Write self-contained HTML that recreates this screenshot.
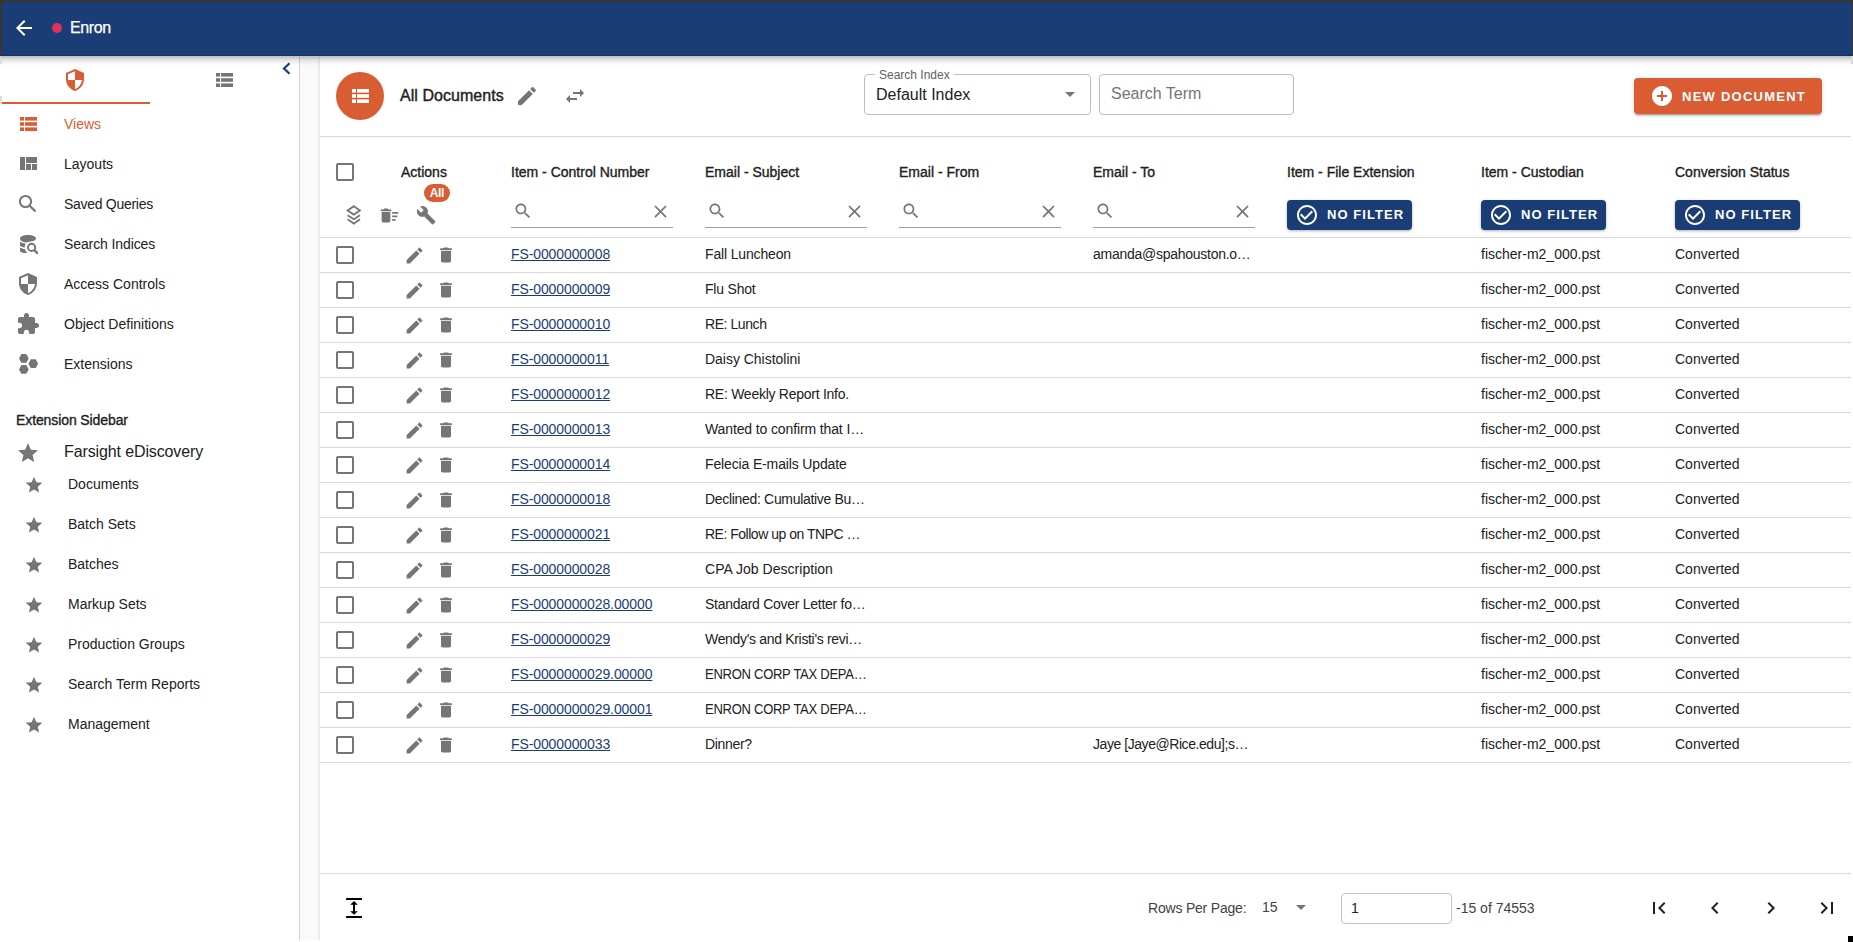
<!DOCTYPE html>
<html><head><meta charset="utf-8"><style>
*{margin:0;padding:0;box-sizing:content-box}
html,body{width:1853px;height:942px;overflow:hidden;background:#fff;font-family:"Liberation Sans",sans-serif;}
.t{position:absolute;white-space:nowrap}
.ic{position:absolute;display:block}
#frame{position:absolute;left:0;top:0;width:1853px;height:56px;background:#363636}
#hdr{position:absolute;left:2px;top:2px;width:1850px;height:54px;background:#1b3d75;border-radius:3px 6px 0 0}
#hshadow{position:absolute;left:0;top:57px;width:1853px;height:9px;background:linear-gradient(rgba(0,0,0,.23),rgba(0,0,0,.1) 35%,rgba(0,0,0,.03) 70%,rgba(0,0,0,0));z-index:5}
#hline1{position:absolute;left:2px;top:55px;width:1850px;height:1px;background:#17315f;z-index:5}
#hline2{position:absolute;left:0;top:56px;width:1853px;height:1px;background:#bcc3cf;z-index:5}
#sb{position:absolute;left:0;top:56px;width:299px;height:884px;background:#fff;border-right:1px solid #d4d4d4}
#card{position:absolute;left:320px;top:56px;width:1533px;height:886px;background:#fff;}
#cardedge{position:absolute;left:317px;top:56px;width:3px;height:884px;background:linear-gradient(90deg,rgba(0,0,0,0),rgba(0,0,0,.035) 50%,rgba(0,0,0,.09))}
#gutter{position:absolute;left:300px;top:56px;width:20px;height:884px;background:#fafafa}
</style></head>
<body>
<div id="frame"></div>
<div id="hdr"></div>
<svg class="ic" style="left:12px;top:16px;width:24px;height:24px;" viewBox="0 0 24 24"><path fill="#fff" d="M20 11H7.83l5.59-5.59L12 4l-8 8 8 8 1.41-1.41L7.83 13H20v-2z"/></svg>
<div style="position:absolute;left:52px;top:23px;width:10px;height:10px;border-radius:50%;background:#e2305c"></div>
<div class="t" style="left:70px;top:18px;font-size:16px;color:#fff;font-weight:normal;line-height:20px;letter-spacing:-0.4px;-webkit-text-stroke:0.25px #fff;">Enron</div>
<div id="hshadow"></div><div id="hline1"></div><div id="hline2"></div>
<div id="sb"></div>
<svg class="ic" style="left:63px;top:68px;width:24px;height:24px;" viewBox="0 0 24 24"><path fill="#d95c33" d="M12 1L3 5v6c0 5.55 3.84 10.74 9 12 5.16-1.26 9-6.45 9-12V5l-9-4zm0 10.99h7c-.53 4.12-3.28 7.790-7 8.94V12H5V6.3l7-3.11v8.8z"/></svg>
<svg class="ic" style="left:216px;top:73px;width:17px;height:14px;" viewBox="0 0 17 14"><g fill="#757575"><rect x="0" y="0" width="4" height="3.6"/><rect x="5" y="0" width="12" height="3.6"/><rect x="0" y="5.2" width="4" height="3.6"/><rect x="5" y="5.2" width="12" height="3.6"/><rect x="0" y="10.4" width="4" height="3.6"/><rect x="5" y="10.4" width="12" height="3.6"/></g></svg>
<div style="position:absolute;left:2px;top:102px;width:148px;height:2px;background:#d95c33"></div>
<svg class="ic" style="left:282px;top:62px;width:9px;height:13px;" viewBox="0 0 9 13"><path d="M7.5 1.2 L2 6.5 L7.5 11.8" fill="none" stroke="#1b3d75" stroke-width="2.2"/></svg>
<div class="t" style="left:64px;top:115px;font-size:14px;color:#d95c33;font-weight:normal;line-height:18px;letter-spacing:0px;">Views</div>
<div class="t" style="left:64px;top:155px;font-size:14px;color:#212121;font-weight:normal;line-height:18px;letter-spacing:0px;">Layouts</div>
<div class="t" style="left:64px;top:195px;font-size:14px;color:#212121;font-weight:normal;line-height:18px;letter-spacing:-0.29px;">Saved Queries</div>
<div class="t" style="left:64px;top:235px;font-size:14px;color:#212121;font-weight:normal;line-height:18px;letter-spacing:-0.1px;">Search Indices</div>
<div class="t" style="left:64px;top:275px;font-size:14px;color:#212121;font-weight:normal;line-height:18px;letter-spacing:0px;">Access Controls</div>
<div class="t" style="left:64px;top:315px;font-size:14px;color:#212121;font-weight:normal;line-height:18px;letter-spacing:0px;">Object Definitions</div>
<div class="t" style="left:64px;top:355px;font-size:14px;color:#212121;font-weight:normal;line-height:18px;letter-spacing:0px;">Extensions</div>
<svg class="ic" style="left:20px;top:117px;width:17px;height:14px;" viewBox="0 0 17 14"><g fill="#d95c33"><rect x="0" y="0" width="4" height="3.6"/><rect x="5" y="0" width="12" height="3.6"/><rect x="0" y="5.2" width="4" height="3.6"/><rect x="5" y="5.2" width="12" height="3.6"/><rect x="0" y="10.4" width="4" height="3.6"/><rect x="5" y="10.4" width="12" height="3.6"/></g></svg>
<svg class="ic" style="left:20px;top:157px;width:17px;height:13px;" viewBox="0 0 17 13"><g fill="#757575"><rect x="0" y="0" width="5" height="13"/><rect x="6" y="0" width="11" height="6"/><rect x="6" y="7" width="5" height="6"/><rect x="12" y="7" width="5" height="6"/></g></svg>
<svg class="ic" style="left:18px;top:194px;width:19px;height:19px;" viewBox="0 0 19 19"><circle cx="7.5" cy="7.5" r="5.6" fill="none" stroke="#757575" stroke-width="2"/><path d="M11.5 11.5 L17.5 17.5" stroke="#757575" stroke-width="2.2"/></svg>
<svg class="ic" style="left:14px;top:230px;width:30px;height:30px;" viewBox="0 0 30 30"><g fill="#757575"><path d="M6 8.6 C6 6.3 9.6 5 14 5 C18.4 5 22 6.3 22 8.6 C22 10.2 20 11 18 11.3 C15.5 11.6 13.5 12.5 12.3 12.5 C8.6 12.4 6 11 6 8.6Z"/><path d="M6 11.8 C7.5 12.8 9.5 13.3 11.6 13.6 C10.9 14.8 10.7 16.2 10.8 17.6 C8.8 17.3 7 16.7 6 15.8Z"/><path d="M6 17.4 C7.3 18.3 9 18.9 11 19.2 C11.4 20.7 12.3 22 13.6 23 C9.8 23.3 6.2 22.5 6 21Z"/></g><circle cx="17.6" cy="17.4" r="3.6" fill="none" stroke="#757575" stroke-width="1.9"/><path d="M20.3 20.1 L23.2 23" stroke="#757575" stroke-width="2.3" stroke-linecap="round"/></svg>
<svg class="ic" style="left:16px;top:272px;width:24px;height:24px;" viewBox="0 0 24 24"><path fill="#757575" d="M12 1L3 5v6c0 5.55 3.84 10.74 9 12 5.16-1.26 9-6.45 9-12V5l-9-4zm0 10.99h7c-.53 4.12-3.28 7.790-7 8.94V12H5V6.3l7-3.11v8.8z"/></svg>
<svg class="ic" style="left:16px;top:312px;width:24px;height:24px;" viewBox="0 0 24 24"><path fill="#757575" d="M20.5 11H19V7c0-1.1-.9-2-2-2h-4V3.5C13 2.12 11.88 1 10.5 1S8 2.12 8 3.5V5H4c-1.1 0-1.99.9-1.99 2v3.8H3.5c1.49 0 2.7 1.21 2.7 2.7s-1.21 2.7-2.7 2.7H2V20c0 1.1.9 2 2 2h3.8v-1.5c0-1.49 1.21-2.7 2.7-2.7 1.49 0 2.7 1.21 2.7 2.7V22H17c1.1 0 2-.9 2-2v-4h1.5c1.38 0 2.5-1.12 2.5-2.5S21.88 11 20.5 11z"/></svg>
<svg class="ic" style="left:17px;top:353px;width:22px;height:22px;" viewBox="0 0 22 22"><g fill="#757575"><path d="M4.4 1 h4.9 l2.4 4.4 l-2.4 4.4 h-4.9 l-2.4 -4.4z"/><path d="M13.8 6.3 h4.9 l2.4 4.4 l-2.4 4.4 h-4.9 l-2.4 -4.4z"/><path d="M4.4 12 h4.9 l2.4 4.4 l-2.4 4.4 h-4.9 l-2.4 -4.4z"/></g></svg>
<div class="t" style="left:16px;top:411px;font-size:14px;color:#212121;font-weight:normal;line-height:18px;-webkit-text-stroke:0.35px #212121;letter-spacing:-0.1px;">Extension Sidebar</div>
<svg class="ic" style="left:16px;top:441px;width:24px;height:24px;" viewBox="0 0 24 24"><path fill="#757575" d="M12 17.27L18.18 21l-1.64-7.03L22 9.24l-7.19-.61L12 2 9.19 8.63 2 9.24l5.46 4.73L5.82 21z"/></svg>
<div class="t" style="left:64px;top:442px;font-size:16px;color:#212121;font-weight:normal;line-height:20px;letter-spacing:-0.12px;">Farsight eDiscovery</div>
<svg class="ic" style="left:24px;top:475px;width:20px;height:20px;" viewBox="0 0 24 24"><path fill="#757575" d="M12 17.27L18.18 21l-1.64-7.03L22 9.24l-7.19-.61L12 2 9.19 8.63 2 9.24l5.46 4.73L5.82 21z"/></svg>
<div class="t" style="left:68px;top:475px;font-size:14px;color:#212121;font-weight:normal;line-height:18px;">Documents</div>
<svg class="ic" style="left:24px;top:515px;width:20px;height:20px;" viewBox="0 0 24 24"><path fill="#757575" d="M12 17.27L18.18 21l-1.64-7.03L22 9.24l-7.19-.61L12 2 9.19 8.63 2 9.24l5.46 4.73L5.82 21z"/></svg>
<div class="t" style="left:68px;top:515px;font-size:14px;color:#212121;font-weight:normal;line-height:18px;">Batch Sets</div>
<svg class="ic" style="left:24px;top:555px;width:20px;height:20px;" viewBox="0 0 24 24"><path fill="#757575" d="M12 17.27L18.18 21l-1.64-7.03L22 9.24l-7.19-.61L12 2 9.19 8.63 2 9.24l5.46 4.73L5.82 21z"/></svg>
<div class="t" style="left:68px;top:555px;font-size:14px;color:#212121;font-weight:normal;line-height:18px;">Batches</div>
<svg class="ic" style="left:24px;top:595px;width:20px;height:20px;" viewBox="0 0 24 24"><path fill="#757575" d="M12 17.27L18.18 21l-1.64-7.03L22 9.24l-7.19-.61L12 2 9.19 8.63 2 9.24l5.46 4.73L5.82 21z"/></svg>
<div class="t" style="left:68px;top:595px;font-size:14px;color:#212121;font-weight:normal;line-height:18px;">Markup Sets</div>
<svg class="ic" style="left:24px;top:635px;width:20px;height:20px;" viewBox="0 0 24 24"><path fill="#757575" d="M12 17.27L18.18 21l-1.64-7.03L22 9.24l-7.19-.61L12 2 9.19 8.63 2 9.24l5.46 4.73L5.82 21z"/></svg>
<div class="t" style="left:68px;top:635px;font-size:14px;color:#212121;font-weight:normal;line-height:18px;">Production Groups</div>
<svg class="ic" style="left:24px;top:675px;width:20px;height:20px;" viewBox="0 0 24 24"><path fill="#757575" d="M12 17.27L18.18 21l-1.64-7.03L22 9.24l-7.19-.61L12 2 9.19 8.63 2 9.24l5.46 4.73L5.82 21z"/></svg>
<div class="t" style="left:68px;top:675px;font-size:14px;color:#212121;font-weight:normal;line-height:18px;">Search Term Reports</div>
<svg class="ic" style="left:24px;top:715px;width:20px;height:20px;" viewBox="0 0 24 24"><path fill="#757575" d="M12 17.27L18.18 21l-1.64-7.03L22 9.24l-7.19-.61L12 2 9.19 8.63 2 9.24l5.46 4.73L5.82 21z"/></svg>
<div class="t" style="left:68px;top:715px;font-size:14px;color:#212121;font-weight:normal;line-height:18px;">Management</div>
<div id="gutter"></div>
<div id="card"></div>
<div id="cardedge"></div>
<div style="position:absolute;left:336px;top:72px;width:48px;height:48px;border-radius:50%;background:#d95c33"></div>
<svg class="ic" style="left:352px;top:89px;width:17px;height:14px;" viewBox="0 0 17 14"><g fill="#fff"><rect x="0" y="0" width="4" height="3.6"/><rect x="5" y="0" width="12" height="3.6"/><rect x="0" y="5.2" width="4" height="3.6"/><rect x="5" y="5.2" width="12" height="3.6"/><rect x="0" y="10.4" width="4" height="3.6"/><rect x="5" y="10.4" width="12" height="3.6"/></g></svg>
<div class="t" style="left:400px;top:86px;font-size:16px;color:#212121;font-weight:normal;line-height:20px;-webkit-text-stroke:0.4px #212121;letter-spacing:0.05px;">All Documents</div>
<svg class="ic" style="left:515px;top:84px;width:24px;height:24px;" viewBox="0 0 24 24"><path fill="#757575" d="M3 17.25V21h3.75L17.81 9.94l-3.75-3.75L3 17.25zM20.71 7.04c.39-.39.39-1.02 0-1.41l-2.34-2.34c-.39-.39-1.02-.39-1.41 0l-1.83 1.83 3.75 3.75 1.83-1.83z"/></svg>
<svg class="ic" style="left:563px;top:84px;width:24px;height:24px;" viewBox="0 0 24 24"><path fill="#757575" d="M6.99 11L3 15l3.99 4v-3H14v-2H6.99v-3zM21 9l-3.99-4v3H10v2h7.01v3L21 9z"/></svg>
<div style="position:absolute;left:864px;top:74px;width:225px;height:39px;border:1px solid #bdbdbd;border-radius:4px;"></div>
<div style="position:absolute;left:875px;top:68px;height:14px;padding:0 4px;background:#fff;font-size:12px;line-height:14px;color:#616161;">Search Index</div>
<div class="t" style="left:876px;top:85px;font-size:16px;color:#212121;font-weight:normal;line-height:20px;">Default Index</div>
<svg class="ic" style="left:1058px;top:82px;width:24px;height:24px;" viewBox="0 0 24 24"><path fill="#757575" d="M7 10l5 5 5-5z"/></svg>
<div style="position:absolute;left:1099px;top:74px;width:193px;height:39px;border:1px solid #bdbdbd;border-radius:4px;"></div>
<div class="t" style="left:1111px;top:84px;font-size:16px;color:#757575;font-weight:normal;line-height:20px;">Search Term</div>
<div style="position:absolute;left:1634px;top:78px;width:188px;height:36px;border-radius:4px;background:#d95c33;box-shadow:0 3px 1px -2px rgba(0,0,0,.2),0 2px 2px 0 rgba(0,0,0,.14),0 1px 5px 0 rgba(0,0,0,.12);"></div>
<svg class="ic" style="left:1650px;top:84px;width:24px;height:24px;" viewBox="0 0 24 24"><path fill="#fff" d="M12 2C6.48 2 2 6.48 2 12s4.48 10 10 10 10-4.48 10-10S17.52 2 12 2zm5 11h-4v4h-2v-4H7v-2h4V7h2v4h4v2z"/></svg>
<div class="t" style="left:1682px;top:88px;font-size:13px;color:#fff;font-weight:bold;line-height:18px;letter-spacing:1.25px;">NEW DOCUMENT</div>
<div style="position:absolute;left:320px;top:136px;width:1531px;height:1px;background:#dadada"></div>
<svg class="ic" style="left:333px;top:160px;width:24px;height:24px;" viewBox="0 0 24 24"><path fill="#757575" d="M19 5v14H5V5h14m0-2H5c-1.1 0-2 .9-2 2v14c0 1.1.9 2 2 2h14c1.1 0 2-.9 2-2V5c0-1.1-.9-2-2-2z"/></svg>
<div class="t" style="left:401px;top:163px;font-size:14px;color:#212121;font-weight:normal;line-height:18px;-webkit-text-stroke:0.35px #212121;">Actions</div>
<div class="t" style="left:511px;top:163px;font-size:14px;color:#212121;font-weight:normal;line-height:18px;-webkit-text-stroke:0.35px #212121;">Item - Control Number</div>
<svg class="ic" style="left:513px;top:201px;width:20px;height:20px;" viewBox="0 0 24 24"><path fill="#757575" d="M15.5 14h-.79l-.28-.27C15.41 12.59 16 11.11 16 9.5 16 5.910 13.090 3 9.5 3S3 5.91 3 9.5 5.91 16 9.5 16c1.61 0 3.09-.59 4.23-1.57l.27.28v.79l5 4.99L20.49 19l-4.99-5zm-6 0C7.01 14 5 11.99 5 9.5S7.01 5 9.5 5 14 7.01 14 9.5 11.99 14 9.5 14z"/></svg>
<svg class="ic" style="left:650px;top:201px;width:21px;height:21px;" viewBox="0 0 24 24"><path fill="#757575" d="M19 6.41L17.59 5 12 10.59 6.41 5 5 6.41 10.59 12 5 17.59 6.41 19 12 13.41 17.59 19 19 17.59 13.41 12z"/></svg>
<div style="position:absolute;left:511px;top:227px;width:162px;height:1px;background:#9e9e9e"></div>
<div class="t" style="left:705px;top:163px;font-size:14px;color:#212121;font-weight:normal;line-height:18px;-webkit-text-stroke:0.35px #212121;">Email - Subject</div>
<svg class="ic" style="left:707px;top:201px;width:20px;height:20px;" viewBox="0 0 24 24"><path fill="#757575" d="M15.5 14h-.79l-.28-.27C15.41 12.59 16 11.11 16 9.5 16 5.910 13.090 3 9.5 3S3 5.91 3 9.5 5.91 16 9.5 16c1.61 0 3.09-.59 4.23-1.57l.27.28v.79l5 4.99L20.49 19l-4.99-5zm-6 0C7.01 14 5 11.99 5 9.5S7.01 5 9.5 5 14 7.01 14 9.5 11.99 14 9.5 14z"/></svg>
<svg class="ic" style="left:844px;top:201px;width:21px;height:21px;" viewBox="0 0 24 24"><path fill="#757575" d="M19 6.41L17.59 5 12 10.59 6.41 5 5 6.41 10.59 12 5 17.59 6.41 19 12 13.41 17.59 19 19 17.59 13.41 12z"/></svg>
<div style="position:absolute;left:705px;top:227px;width:162px;height:1px;background:#9e9e9e"></div>
<div class="t" style="left:899px;top:163px;font-size:14px;color:#212121;font-weight:normal;line-height:18px;-webkit-text-stroke:0.35px #212121;">Email - From</div>
<svg class="ic" style="left:901px;top:201px;width:20px;height:20px;" viewBox="0 0 24 24"><path fill="#757575" d="M15.5 14h-.79l-.28-.27C15.41 12.59 16 11.11 16 9.5 16 5.910 13.090 3 9.5 3S3 5.91 3 9.5 5.91 16 9.5 16c1.61 0 3.09-.59 4.23-1.57l.27.28v.79l5 4.99L20.49 19l-4.99-5zm-6 0C7.01 14 5 11.99 5 9.5S7.01 5 9.5 5 14 7.01 14 9.5 11.99 14 9.5 14z"/></svg>
<svg class="ic" style="left:1038px;top:201px;width:21px;height:21px;" viewBox="0 0 24 24"><path fill="#757575" d="M19 6.41L17.59 5 12 10.59 6.41 5 5 6.41 10.59 12 5 17.59 6.41 19 12 13.41 17.59 19 19 17.59 13.41 12z"/></svg>
<div style="position:absolute;left:899px;top:227px;width:162px;height:1px;background:#9e9e9e"></div>
<div class="t" style="left:1093px;top:163px;font-size:14px;color:#212121;font-weight:normal;line-height:18px;-webkit-text-stroke:0.35px #212121;">Email - To</div>
<svg class="ic" style="left:1095px;top:201px;width:20px;height:20px;" viewBox="0 0 24 24"><path fill="#757575" d="M15.5 14h-.79l-.28-.27C15.41 12.59 16 11.11 16 9.5 16 5.910 13.090 3 9.5 3S3 5.91 3 9.5 5.91 16 9.5 16c1.61 0 3.09-.59 4.23-1.57l.27.28v.79l5 4.99L20.49 19l-4.99-5zm-6 0C7.01 14 5 11.99 5 9.5S7.01 5 9.5 5 14 7.01 14 9.5 11.99 14 9.5 14z"/></svg>
<svg class="ic" style="left:1232px;top:201px;width:21px;height:21px;" viewBox="0 0 24 24"><path fill="#757575" d="M19 6.41L17.59 5 12 10.59 6.41 5 5 6.41 10.59 12 5 17.59 6.41 19 12 13.41 17.59 19 19 17.59 13.41 12z"/></svg>
<div style="position:absolute;left:1093px;top:227px;width:162px;height:1px;background:#9e9e9e"></div>
<div class="t" style="left:1287px;top:163px;font-size:14px;color:#212121;font-weight:normal;line-height:18px;-webkit-text-stroke:0.35px #212121;">Item - File Extension</div>
<div style="position:absolute;left:1287px;top:200px;width:125px;height:30px;border-radius:4px;background:#1b3d75;box-shadow:0 1px 3px rgba(0,0,0,.3)"></div>
<svg class="ic" style="left:1295px;top:202.5px;width:24px;height:24px;" viewBox="0 0 24 24"><path fill="#fff" d="M16.59 7.58L10 14.17l-3.59-3.58L5 12l5 5 8-8zM12 2C6.48 2 2 6.48 2 12s4.48 10 10 10 10-4.48 10-10S17.52 2 12 2zm0 18c-4.42 0-8-3.58-8-8s3.58-8 8-8 8 3.58 8 8-3.58 8-8 8z"/></svg>
<div class="t" style="left:1327px;top:205.5px;font-size:13px;color:#fff;font-weight:bold;line-height:18px;letter-spacing:1.05px;">NO FILTER</div>
<div class="t" style="left:1481px;top:163px;font-size:14px;color:#212121;font-weight:normal;line-height:18px;-webkit-text-stroke:0.35px #212121;">Item - Custodian</div>
<div style="position:absolute;left:1481px;top:200px;width:125px;height:30px;border-radius:4px;background:#1b3d75;box-shadow:0 1px 3px rgba(0,0,0,.3)"></div>
<svg class="ic" style="left:1489px;top:202.5px;width:24px;height:24px;" viewBox="0 0 24 24"><path fill="#fff" d="M16.59 7.58L10 14.17l-3.59-3.58L5 12l5 5 8-8zM12 2C6.48 2 2 6.48 2 12s4.48 10 10 10 10-4.48 10-10S17.52 2 12 2zm0 18c-4.42 0-8-3.58-8-8s3.58-8 8-8 8 3.58 8 8-3.58 8-8 8z"/></svg>
<div class="t" style="left:1521px;top:205.5px;font-size:13px;color:#fff;font-weight:bold;line-height:18px;letter-spacing:1.05px;">NO FILTER</div>
<div class="t" style="left:1675px;top:163px;font-size:14px;color:#212121;font-weight:normal;line-height:18px;-webkit-text-stroke:0.35px #212121;">Conversion Status</div>
<div style="position:absolute;left:1675px;top:200px;width:125px;height:30px;border-radius:4px;background:#1b3d75;box-shadow:0 1px 3px rgba(0,0,0,.3)"></div>
<svg class="ic" style="left:1683px;top:202.5px;width:24px;height:24px;" viewBox="0 0 24 24"><path fill="#fff" d="M16.59 7.58L10 14.17l-3.59-3.58L5 12l5 5 8-8zM12 2C6.48 2 2 6.48 2 12s4.48 10 10 10 10-4.48 10-10S17.52 2 12 2zm0 18c-4.42 0-8-3.58-8-8s3.58-8 8-8 8 3.58 8 8-3.58 8-8 8z"/></svg>
<div class="t" style="left:1715px;top:205.5px;font-size:13px;color:#fff;font-weight:bold;line-height:18px;letter-spacing:1.05px;">NO FILTER</div>
<svg class="ic" style="left:345px;top:204px;width:18px;height:22px;" viewBox="0 0 18 22"><g fill="none" stroke="#757575" stroke-width="1.8"><path d="M8.8 2.2 L15 6.5 L8.8 10.6 L2.6 6.5Z"/><path d="M2.6 11.2 L8.8 15.2 L15 11.2"/><path d="M2.6 15.3 L8.8 19.6 L15 15.3"/></g></svg>
<svg class="ic" style="left:379.3px;top:204.7px;width:21px;height:21px;" viewBox="0 0 24 24"><path fill="#757575" d="M15 16h4v2h-4zm0-8h7v2h-7zm0 4h6v2h-6zM3 18c0 1.1.9 2 2 2h6c1.1 0 2-.9 2-2V8H3v10zM14 5h-3l-1-1H6L5 5H2v2h12z"/></svg>
<svg class="ic" style="left:416px;top:205px;width:20.4px;height:20.4px;" viewBox="0 0 24 24"><path fill="#757575" d="M22.7 19l-9.1-9.1c.9-2.3.4-5-1.5-6.9-2-2-5-2.4-7.4-1.3L9 6 6 9 1.6 4.7C.4 7.1.9 10.1 2.9 12.1c1.9 1.9 4.6 2.4 6.9 1.5l9.1 9.1c.4.4 1 .4 1.4 0l2.3-2.3c.5-.4.5-1.1.1-1.4z"/></svg>
<div style="position:absolute;left:424px;top:184px;width:26px;height:18px;border-radius:9px;background:#d95c33;color:#fff;font-size:12px;line-height:18px;text-align:center;font-weight:bold;letter-spacing:-0.4px;text-indent:-0.4px">All</div>
<div style="position:absolute;left:320px;top:237px;width:1531px;height:1px;background:#dadada"></div>
<svg class="ic" style="left:333px;top:243px;width:24px;height:24px;" viewBox="0 0 24 24"><path fill="#757575" d="M19 5v14H5V5h14m0-2H5c-1.1 0-2 .9-2 2v14c0 1.1.9 2 2 2h14c1.1 0 2-.9 2-2V5c0-1.1-.9-2-2-2z"/></svg>
<svg class="ic" style="left:404px;top:244.6px;width:21px;height:21px;" viewBox="0 0 24 24"><path fill="#757575" d="M3 17.25V21h3.75L17.81 9.94l-3.75-3.75L3 17.25zM20.71 7.04c.39-.39.39-1.02 0-1.41l-2.34-2.34c-.39-.39-1.02-.39-1.41 0l-1.83 1.83 3.75 3.75 1.83-1.83z"/></svg>
<svg class="ic" style="left:436px;top:245.3px;width:20px;height:20px;" viewBox="0 0 24 24"><path fill="#757575" d="M6 19c0 1.1.9 2 2 2h8c1.1 0 2-.9 2-2V7H6v12zM19 4h-3.5l-1-1h-5l-1 1H5v2h14V4z"/></svg>
<div class="t" style="left:511px;top:245px;font-size:14px;color:#1b3d75;font-weight:normal;line-height:18px;text-decoration:underline;letter-spacing:-0.1px;">FS-0000000008</div>
<div class="t" style="left:705px;top:245px;font-size:14px;color:#212121;font-weight:normal;line-height:18px;letter-spacing:-0.154px;">Fall Luncheon</div>
<div class="t" style="left:1093px;top:245px;font-size:14px;color:#212121;font-weight:normal;line-height:18px;letter-spacing:-0.266px;">amanda@spahouston.o…</div>
<div class="t" style="left:1481px;top:245px;font-size:14px;color:#212121;font-weight:normal;line-height:18px;">fischer-m2_000.pst</div>
<div class="t" style="left:1675px;top:245px;font-size:14px;color:#212121;font-weight:normal;line-height:18px;">Converted</div>
<div style="position:absolute;left:320px;top:272px;width:1531px;height:1px;background:#dadada"></div>
<svg class="ic" style="left:333px;top:278px;width:24px;height:24px;" viewBox="0 0 24 24"><path fill="#757575" d="M19 5v14H5V5h14m0-2H5c-1.1 0-2 .9-2 2v14c0 1.1.9 2 2 2h14c1.1 0 2-.9 2-2V5c0-1.1-.9-2-2-2z"/></svg>
<svg class="ic" style="left:404px;top:279.6px;width:21px;height:21px;" viewBox="0 0 24 24"><path fill="#757575" d="M3 17.25V21h3.75L17.81 9.94l-3.75-3.75L3 17.25zM20.71 7.04c.39-.39.39-1.02 0-1.41l-2.34-2.34c-.39-.39-1.02-.39-1.41 0l-1.83 1.83 3.75 3.75 1.83-1.83z"/></svg>
<svg class="ic" style="left:436px;top:280.3px;width:20px;height:20px;" viewBox="0 0 24 24"><path fill="#757575" d="M6 19c0 1.1.9 2 2 2h8c1.1 0 2-.9 2-2V7H6v12zM19 4h-3.5l-1-1h-5l-1 1H5v2h14V4z"/></svg>
<div class="t" style="left:511px;top:280px;font-size:14px;color:#1b3d75;font-weight:normal;line-height:18px;text-decoration:underline;letter-spacing:-0.1px;">FS-0000000009</div>
<div class="t" style="left:705px;top:280px;font-size:14px;color:#212121;font-weight:normal;line-height:18px;letter-spacing:-0.203px;">Flu Shot</div>
<div class="t" style="left:1481px;top:280px;font-size:14px;color:#212121;font-weight:normal;line-height:18px;">fischer-m2_000.pst</div>
<div class="t" style="left:1675px;top:280px;font-size:14px;color:#212121;font-weight:normal;line-height:18px;">Converted</div>
<div style="position:absolute;left:320px;top:307px;width:1531px;height:1px;background:#dadada"></div>
<svg class="ic" style="left:333px;top:313px;width:24px;height:24px;" viewBox="0 0 24 24"><path fill="#757575" d="M19 5v14H5V5h14m0-2H5c-1.1 0-2 .9-2 2v14c0 1.1.9 2 2 2h14c1.1 0 2-.9 2-2V5c0-1.1-.9-2-2-2z"/></svg>
<svg class="ic" style="left:404px;top:314.6px;width:21px;height:21px;" viewBox="0 0 24 24"><path fill="#757575" d="M3 17.25V21h3.75L17.81 9.94l-3.75-3.75L3 17.25zM20.71 7.04c.39-.39.39-1.02 0-1.41l-2.34-2.34c-.39-.39-1.02-.39-1.41 0l-1.83 1.83 3.75 3.75 1.83-1.83z"/></svg>
<svg class="ic" style="left:436px;top:315.3px;width:20px;height:20px;" viewBox="0 0 24 24"><path fill="#757575" d="M6 19c0 1.1.9 2 2 2h8c1.1 0 2-.9 2-2V7H6v12zM19 4h-3.5l-1-1h-5l-1 1H5v2h14V4z"/></svg>
<div class="t" style="left:511px;top:315px;font-size:14px;color:#1b3d75;font-weight:normal;line-height:18px;text-decoration:underline;letter-spacing:-0.1px;">FS-0000000010</div>
<div class="t" style="left:705px;top:315px;font-size:14px;color:#212121;font-weight:normal;line-height:18px;letter-spacing:-0.429px;">RE: Lunch</div>
<div class="t" style="left:1481px;top:315px;font-size:14px;color:#212121;font-weight:normal;line-height:18px;">fischer-m2_000.pst</div>
<div class="t" style="left:1675px;top:315px;font-size:14px;color:#212121;font-weight:normal;line-height:18px;">Converted</div>
<div style="position:absolute;left:320px;top:342px;width:1531px;height:1px;background:#dadada"></div>
<svg class="ic" style="left:333px;top:348px;width:24px;height:24px;" viewBox="0 0 24 24"><path fill="#757575" d="M19 5v14H5V5h14m0-2H5c-1.1 0-2 .9-2 2v14c0 1.1.9 2 2 2h14c1.1 0 2-.9 2-2V5c0-1.1-.9-2-2-2z"/></svg>
<svg class="ic" style="left:404px;top:349.6px;width:21px;height:21px;" viewBox="0 0 24 24"><path fill="#757575" d="M3 17.25V21h3.75L17.81 9.94l-3.75-3.75L3 17.25zM20.71 7.04c.39-.39.39-1.02 0-1.41l-2.34-2.34c-.39-.39-1.02-.39-1.41 0l-1.83 1.83 3.75 3.75 1.83-1.83z"/></svg>
<svg class="ic" style="left:436px;top:350.3px;width:20px;height:20px;" viewBox="0 0 24 24"><path fill="#757575" d="M6 19c0 1.1.9 2 2 2h8c1.1 0 2-.9 2-2V7H6v12zM19 4h-3.5l-1-1h-5l-1 1H5v2h14V4z"/></svg>
<div class="t" style="left:511px;top:350px;font-size:14px;color:#1b3d75;font-weight:normal;line-height:18px;text-decoration:underline;letter-spacing:-0.1px;">FS-0000000011</div>
<div class="t" style="left:705px;top:350px;font-size:14px;color:#212121;font-weight:normal;line-height:18px;letter-spacing:-0.023px;">Daisy Chistolini</div>
<div class="t" style="left:1481px;top:350px;font-size:14px;color:#212121;font-weight:normal;line-height:18px;">fischer-m2_000.pst</div>
<div class="t" style="left:1675px;top:350px;font-size:14px;color:#212121;font-weight:normal;line-height:18px;">Converted</div>
<div style="position:absolute;left:320px;top:377px;width:1531px;height:1px;background:#dadada"></div>
<svg class="ic" style="left:333px;top:383px;width:24px;height:24px;" viewBox="0 0 24 24"><path fill="#757575" d="M19 5v14H5V5h14m0-2H5c-1.1 0-2 .9-2 2v14c0 1.1.9 2 2 2h14c1.1 0 2-.9 2-2V5c0-1.1-.9-2-2-2z"/></svg>
<svg class="ic" style="left:404px;top:384.6px;width:21px;height:21px;" viewBox="0 0 24 24"><path fill="#757575" d="M3 17.25V21h3.75L17.81 9.94l-3.75-3.75L3 17.25zM20.71 7.04c.39-.39.39-1.02 0-1.41l-2.34-2.34c-.39-.39-1.02-.39-1.41 0l-1.83 1.83 3.75 3.75 1.83-1.83z"/></svg>
<svg class="ic" style="left:436px;top:385.3px;width:20px;height:20px;" viewBox="0 0 24 24"><path fill="#757575" d="M6 19c0 1.1.9 2 2 2h8c1.1 0 2-.9 2-2V7H6v12zM19 4h-3.5l-1-1h-5l-1 1H5v2h14V4z"/></svg>
<div class="t" style="left:511px;top:385px;font-size:14px;color:#1b3d75;font-weight:normal;line-height:18px;text-decoration:underline;letter-spacing:-0.1px;">FS-0000000012</div>
<div class="t" style="left:705px;top:385px;font-size:14px;color:#212121;font-weight:normal;line-height:18px;letter-spacing:-0.265px;">RE: Weekly Report Info.</div>
<div class="t" style="left:1481px;top:385px;font-size:14px;color:#212121;font-weight:normal;line-height:18px;">fischer-m2_000.pst</div>
<div class="t" style="left:1675px;top:385px;font-size:14px;color:#212121;font-weight:normal;line-height:18px;">Converted</div>
<div style="position:absolute;left:320px;top:412px;width:1531px;height:1px;background:#dadada"></div>
<svg class="ic" style="left:333px;top:418px;width:24px;height:24px;" viewBox="0 0 24 24"><path fill="#757575" d="M19 5v14H5V5h14m0-2H5c-1.1 0-2 .9-2 2v14c0 1.1.9 2 2 2h14c1.1 0 2-.9 2-2V5c0-1.1-.9-2-2-2z"/></svg>
<svg class="ic" style="left:404px;top:419.6px;width:21px;height:21px;" viewBox="0 0 24 24"><path fill="#757575" d="M3 17.25V21h3.75L17.81 9.94l-3.75-3.75L3 17.25zM20.71 7.04c.39-.39.39-1.02 0-1.41l-2.34-2.34c-.39-.39-1.02-.39-1.41 0l-1.83 1.83 3.75 3.75 1.83-1.83z"/></svg>
<svg class="ic" style="left:436px;top:420.3px;width:20px;height:20px;" viewBox="0 0 24 24"><path fill="#757575" d="M6 19c0 1.1.9 2 2 2h8c1.1 0 2-.9 2-2V7H6v12zM19 4h-3.5l-1-1h-5l-1 1H5v2h14V4z"/></svg>
<div class="t" style="left:511px;top:420px;font-size:14px;color:#1b3d75;font-weight:normal;line-height:18px;text-decoration:underline;letter-spacing:-0.1px;">FS-0000000013</div>
<div class="t" style="left:705px;top:420px;font-size:14px;color:#212121;font-weight:normal;line-height:18px;letter-spacing:-0.122px;">Wanted to confirm that I…</div>
<div class="t" style="left:1481px;top:420px;font-size:14px;color:#212121;font-weight:normal;line-height:18px;">fischer-m2_000.pst</div>
<div class="t" style="left:1675px;top:420px;font-size:14px;color:#212121;font-weight:normal;line-height:18px;">Converted</div>
<div style="position:absolute;left:320px;top:447px;width:1531px;height:1px;background:#dadada"></div>
<svg class="ic" style="left:333px;top:453px;width:24px;height:24px;" viewBox="0 0 24 24"><path fill="#757575" d="M19 5v14H5V5h14m0-2H5c-1.1 0-2 .9-2 2v14c0 1.1.9 2 2 2h14c1.1 0 2-.9 2-2V5c0-1.1-.9-2-2-2z"/></svg>
<svg class="ic" style="left:404px;top:454.6px;width:21px;height:21px;" viewBox="0 0 24 24"><path fill="#757575" d="M3 17.25V21h3.75L17.81 9.94l-3.75-3.75L3 17.25zM20.71 7.04c.39-.39.39-1.02 0-1.41l-2.34-2.34c-.39-.39-1.02-.39-1.41 0l-1.83 1.83 3.75 3.75 1.83-1.83z"/></svg>
<svg class="ic" style="left:436px;top:455.3px;width:20px;height:20px;" viewBox="0 0 24 24"><path fill="#757575" d="M6 19c0 1.1.9 2 2 2h8c1.1 0 2-.9 2-2V7H6v12zM19 4h-3.5l-1-1h-5l-1 1H5v2h14V4z"/></svg>
<div class="t" style="left:511px;top:455px;font-size:14px;color:#1b3d75;font-weight:normal;line-height:18px;text-decoration:underline;letter-spacing:-0.1px;">FS-0000000014</div>
<div class="t" style="left:705px;top:455px;font-size:14px;color:#212121;font-weight:normal;line-height:18px;letter-spacing:-0.140px;">Felecia E-mails Update</div>
<div class="t" style="left:1481px;top:455px;font-size:14px;color:#212121;font-weight:normal;line-height:18px;">fischer-m2_000.pst</div>
<div class="t" style="left:1675px;top:455px;font-size:14px;color:#212121;font-weight:normal;line-height:18px;">Converted</div>
<div style="position:absolute;left:320px;top:482px;width:1531px;height:1px;background:#dadada"></div>
<svg class="ic" style="left:333px;top:488px;width:24px;height:24px;" viewBox="0 0 24 24"><path fill="#757575" d="M19 5v14H5V5h14m0-2H5c-1.1 0-2 .9-2 2v14c0 1.1.9 2 2 2h14c1.1 0 2-.9 2-2V5c0-1.1-.9-2-2-2z"/></svg>
<svg class="ic" style="left:404px;top:489.6px;width:21px;height:21px;" viewBox="0 0 24 24"><path fill="#757575" d="M3 17.25V21h3.75L17.81 9.94l-3.75-3.75L3 17.25zM20.71 7.04c.39-.39.39-1.02 0-1.41l-2.34-2.34c-.39-.39-1.02-.39-1.41 0l-1.83 1.83 3.75 3.75 1.83-1.83z"/></svg>
<svg class="ic" style="left:436px;top:490.3px;width:20px;height:20px;" viewBox="0 0 24 24"><path fill="#757575" d="M6 19c0 1.1.9 2 2 2h8c1.1 0 2-.9 2-2V7H6v12zM19 4h-3.5l-1-1h-5l-1 1H5v2h14V4z"/></svg>
<div class="t" style="left:511px;top:490px;font-size:14px;color:#1b3d75;font-weight:normal;line-height:18px;text-decoration:underline;letter-spacing:-0.1px;">FS-0000000018</div>
<div class="t" style="left:705px;top:490px;font-size:14px;color:#212121;font-weight:normal;line-height:18px;letter-spacing:-0.315px;">Declined: Cumulative Bu…</div>
<div class="t" style="left:1481px;top:490px;font-size:14px;color:#212121;font-weight:normal;line-height:18px;">fischer-m2_000.pst</div>
<div class="t" style="left:1675px;top:490px;font-size:14px;color:#212121;font-weight:normal;line-height:18px;">Converted</div>
<div style="position:absolute;left:320px;top:517px;width:1531px;height:1px;background:#dadada"></div>
<svg class="ic" style="left:333px;top:523px;width:24px;height:24px;" viewBox="0 0 24 24"><path fill="#757575" d="M19 5v14H5V5h14m0-2H5c-1.1 0-2 .9-2 2v14c0 1.1.9 2 2 2h14c1.1 0 2-.9 2-2V5c0-1.1-.9-2-2-2z"/></svg>
<svg class="ic" style="left:404px;top:524.6px;width:21px;height:21px;" viewBox="0 0 24 24"><path fill="#757575" d="M3 17.25V21h3.75L17.81 9.94l-3.75-3.75L3 17.25zM20.71 7.04c.39-.39.39-1.02 0-1.41l-2.34-2.34c-.39-.39-1.02-.39-1.41 0l-1.83 1.83 3.75 3.75 1.83-1.83z"/></svg>
<svg class="ic" style="left:436px;top:525.3px;width:20px;height:20px;" viewBox="0 0 24 24"><path fill="#757575" d="M6 19c0 1.1.9 2 2 2h8c1.1 0 2-.9 2-2V7H6v12zM19 4h-3.5l-1-1h-5l-1 1H5v2h14V4z"/></svg>
<div class="t" style="left:511px;top:525px;font-size:14px;color:#1b3d75;font-weight:normal;line-height:18px;text-decoration:underline;letter-spacing:-0.1px;">FS-0000000021</div>
<div class="t" style="left:705px;top:525px;font-size:14px;color:#212121;font-weight:normal;line-height:18px;letter-spacing:-0.492px;">RE: Follow up on TNPC …</div>
<div class="t" style="left:1481px;top:525px;font-size:14px;color:#212121;font-weight:normal;line-height:18px;">fischer-m2_000.pst</div>
<div class="t" style="left:1675px;top:525px;font-size:14px;color:#212121;font-weight:normal;line-height:18px;">Converted</div>
<div style="position:absolute;left:320px;top:552px;width:1531px;height:1px;background:#dadada"></div>
<svg class="ic" style="left:333px;top:558px;width:24px;height:24px;" viewBox="0 0 24 24"><path fill="#757575" d="M19 5v14H5V5h14m0-2H5c-1.1 0-2 .9-2 2v14c0 1.1.9 2 2 2h14c1.1 0 2-.9 2-2V5c0-1.1-.9-2-2-2z"/></svg>
<svg class="ic" style="left:404px;top:559.6px;width:21px;height:21px;" viewBox="0 0 24 24"><path fill="#757575" d="M3 17.25V21h3.75L17.81 9.94l-3.75-3.75L3 17.25zM20.71 7.04c.39-.39.39-1.02 0-1.41l-2.34-2.34c-.39-.39-1.02-.39-1.41 0l-1.83 1.83 3.75 3.75 1.83-1.83z"/></svg>
<svg class="ic" style="left:436px;top:560.3px;width:20px;height:20px;" viewBox="0 0 24 24"><path fill="#757575" d="M6 19c0 1.1.9 2 2 2h8c1.1 0 2-.9 2-2V7H6v12zM19 4h-3.5l-1-1h-5l-1 1H5v2h14V4z"/></svg>
<div class="t" style="left:511px;top:560px;font-size:14px;color:#1b3d75;font-weight:normal;line-height:18px;text-decoration:underline;letter-spacing:-0.1px;">FS-0000000028</div>
<div class="t" style="left:705px;top:560px;font-size:14px;color:#212121;font-weight:normal;line-height:18px;letter-spacing:0.029px;">CPA Job Description</div>
<div class="t" style="left:1481px;top:560px;font-size:14px;color:#212121;font-weight:normal;line-height:18px;">fischer-m2_000.pst</div>
<div class="t" style="left:1675px;top:560px;font-size:14px;color:#212121;font-weight:normal;line-height:18px;">Converted</div>
<div style="position:absolute;left:320px;top:587px;width:1531px;height:1px;background:#dadada"></div>
<svg class="ic" style="left:333px;top:593px;width:24px;height:24px;" viewBox="0 0 24 24"><path fill="#757575" d="M19 5v14H5V5h14m0-2H5c-1.1 0-2 .9-2 2v14c0 1.1.9 2 2 2h14c1.1 0 2-.9 2-2V5c0-1.1-.9-2-2-2z"/></svg>
<svg class="ic" style="left:404px;top:594.6px;width:21px;height:21px;" viewBox="0 0 24 24"><path fill="#757575" d="M3 17.25V21h3.75L17.81 9.94l-3.75-3.75L3 17.25zM20.71 7.04c.39-.39.39-1.02 0-1.41l-2.34-2.34c-.39-.39-1.02-.39-1.41 0l-1.83 1.83 3.75 3.75 1.83-1.83z"/></svg>
<svg class="ic" style="left:436px;top:595.3px;width:20px;height:20px;" viewBox="0 0 24 24"><path fill="#757575" d="M6 19c0 1.1.9 2 2 2h8c1.1 0 2-.9 2-2V7H6v12zM19 4h-3.5l-1-1h-5l-1 1H5v2h14V4z"/></svg>
<div class="t" style="left:511px;top:595px;font-size:14px;color:#1b3d75;font-weight:normal;line-height:18px;text-decoration:underline;letter-spacing:-0.1px;">FS-0000000028.00000</div>
<div class="t" style="left:705px;top:595px;font-size:14px;color:#212121;font-weight:normal;line-height:18px;letter-spacing:-0.274px;">Standard Cover Letter fo…</div>
<div class="t" style="left:1481px;top:595px;font-size:14px;color:#212121;font-weight:normal;line-height:18px;">fischer-m2_000.pst</div>
<div class="t" style="left:1675px;top:595px;font-size:14px;color:#212121;font-weight:normal;line-height:18px;">Converted</div>
<div style="position:absolute;left:320px;top:622px;width:1531px;height:1px;background:#dadada"></div>
<svg class="ic" style="left:333px;top:628px;width:24px;height:24px;" viewBox="0 0 24 24"><path fill="#757575" d="M19 5v14H5V5h14m0-2H5c-1.1 0-2 .9-2 2v14c0 1.1.9 2 2 2h14c1.1 0 2-.9 2-2V5c0-1.1-.9-2-2-2z"/></svg>
<svg class="ic" style="left:404px;top:629.6px;width:21px;height:21px;" viewBox="0 0 24 24"><path fill="#757575" d="M3 17.25V21h3.75L17.81 9.94l-3.75-3.75L3 17.25zM20.71 7.04c.39-.39.39-1.02 0-1.41l-2.34-2.34c-.39-.39-1.02-.39-1.41 0l-1.83 1.83 3.75 3.75 1.83-1.83z"/></svg>
<svg class="ic" style="left:436px;top:630.3px;width:20px;height:20px;" viewBox="0 0 24 24"><path fill="#757575" d="M6 19c0 1.1.9 2 2 2h8c1.1 0 2-.9 2-2V7H6v12zM19 4h-3.5l-1-1h-5l-1 1H5v2h14V4z"/></svg>
<div class="t" style="left:511px;top:630px;font-size:14px;color:#1b3d75;font-weight:normal;line-height:18px;text-decoration:underline;letter-spacing:-0.1px;">FS-0000000029</div>
<div class="t" style="left:705px;top:630px;font-size:14px;color:#212121;font-weight:normal;line-height:18px;letter-spacing:-0.324px;">Wendy&#39;s and Kristi&#39;s revi…</div>
<div class="t" style="left:1481px;top:630px;font-size:14px;color:#212121;font-weight:normal;line-height:18px;">fischer-m2_000.pst</div>
<div class="t" style="left:1675px;top:630px;font-size:14px;color:#212121;font-weight:normal;line-height:18px;">Converted</div>
<div style="position:absolute;left:320px;top:657px;width:1531px;height:1px;background:#dadada"></div>
<svg class="ic" style="left:333px;top:663px;width:24px;height:24px;" viewBox="0 0 24 24"><path fill="#757575" d="M19 5v14H5V5h14m0-2H5c-1.1 0-2 .9-2 2v14c0 1.1.9 2 2 2h14c1.1 0 2-.9 2-2V5c0-1.1-.9-2-2-2z"/></svg>
<svg class="ic" style="left:404px;top:664.6px;width:21px;height:21px;" viewBox="0 0 24 24"><path fill="#757575" d="M3 17.25V21h3.75L17.81 9.94l-3.75-3.75L3 17.25zM20.71 7.04c.39-.39.39-1.02 0-1.41l-2.34-2.34c-.39-.39-1.02-.39-1.41 0l-1.83 1.83 3.75 3.75 1.83-1.83z"/></svg>
<svg class="ic" style="left:436px;top:665.3px;width:20px;height:20px;" viewBox="0 0 24 24"><path fill="#757575" d="M6 19c0 1.1.9 2 2 2h8c1.1 0 2-.9 2-2V7H6v12zM19 4h-3.5l-1-1h-5l-1 1H5v2h14V4z"/></svg>
<div class="t" style="left:511px;top:665px;font-size:14px;color:#1b3d75;font-weight:normal;line-height:18px;text-decoration:underline;letter-spacing:-0.1px;">FS-0000000029.00000</div>
<div class="t" style="left:705px;top:665px;font-size:14px;color:#212121;font-weight:normal;line-height:18px;letter-spacing:-0.3px;transform:scaleX(0.9308);transform-origin:0 0;">ENRON CORP TAX DEPA…</div>
<div class="t" style="left:1481px;top:665px;font-size:14px;color:#212121;font-weight:normal;line-height:18px;">fischer-m2_000.pst</div>
<div class="t" style="left:1675px;top:665px;font-size:14px;color:#212121;font-weight:normal;line-height:18px;">Converted</div>
<div style="position:absolute;left:320px;top:692px;width:1531px;height:1px;background:#dadada"></div>
<svg class="ic" style="left:333px;top:698px;width:24px;height:24px;" viewBox="0 0 24 24"><path fill="#757575" d="M19 5v14H5V5h14m0-2H5c-1.1 0-2 .9-2 2v14c0 1.1.9 2 2 2h14c1.1 0 2-.9 2-2V5c0-1.1-.9-2-2-2z"/></svg>
<svg class="ic" style="left:404px;top:699.6px;width:21px;height:21px;" viewBox="0 0 24 24"><path fill="#757575" d="M3 17.25V21h3.75L17.81 9.94l-3.75-3.75L3 17.25zM20.71 7.04c.39-.39.39-1.02 0-1.41l-2.34-2.34c-.39-.39-1.02-.39-1.41 0l-1.83 1.83 3.75 3.75 1.83-1.83z"/></svg>
<svg class="ic" style="left:436px;top:700.3px;width:20px;height:20px;" viewBox="0 0 24 24"><path fill="#757575" d="M6 19c0 1.1.9 2 2 2h8c1.1 0 2-.9 2-2V7H6v12zM19 4h-3.5l-1-1h-5l-1 1H5v2h14V4z"/></svg>
<div class="t" style="left:511px;top:700px;font-size:14px;color:#1b3d75;font-weight:normal;line-height:18px;text-decoration:underline;letter-spacing:-0.1px;">FS-0000000029.00001</div>
<div class="t" style="left:705px;top:700px;font-size:14px;color:#212121;font-weight:normal;line-height:18px;letter-spacing:-0.3px;transform:scaleX(0.9308);transform-origin:0 0;">ENRON CORP TAX DEPA…</div>
<div class="t" style="left:1481px;top:700px;font-size:14px;color:#212121;font-weight:normal;line-height:18px;">fischer-m2_000.pst</div>
<div class="t" style="left:1675px;top:700px;font-size:14px;color:#212121;font-weight:normal;line-height:18px;">Converted</div>
<div style="position:absolute;left:320px;top:727px;width:1531px;height:1px;background:#dadada"></div>
<svg class="ic" style="left:333px;top:733px;width:24px;height:24px;" viewBox="0 0 24 24"><path fill="#757575" d="M19 5v14H5V5h14m0-2H5c-1.1 0-2 .9-2 2v14c0 1.1.9 2 2 2h14c1.1 0 2-.9 2-2V5c0-1.1-.9-2-2-2z"/></svg>
<svg class="ic" style="left:404px;top:734.6px;width:21px;height:21px;" viewBox="0 0 24 24"><path fill="#757575" d="M3 17.25V21h3.75L17.81 9.94l-3.75-3.75L3 17.25zM20.71 7.04c.39-.39.39-1.02 0-1.41l-2.34-2.34c-.39-.39-1.02-.39-1.41 0l-1.83 1.83 3.75 3.75 1.83-1.83z"/></svg>
<svg class="ic" style="left:436px;top:735.3px;width:20px;height:20px;" viewBox="0 0 24 24"><path fill="#757575" d="M6 19c0 1.1.9 2 2 2h8c1.1 0 2-.9 2-2V7H6v12zM19 4h-3.5l-1-1h-5l-1 1H5v2h14V4z"/></svg>
<div class="t" style="left:511px;top:735px;font-size:14px;color:#1b3d75;font-weight:normal;line-height:18px;text-decoration:underline;letter-spacing:-0.1px;">FS-0000000033</div>
<div class="t" style="left:705px;top:735px;font-size:14px;color:#212121;font-weight:normal;line-height:18px;letter-spacing:-0.314px;">Dinner?</div>
<div class="t" style="left:1093px;top:735px;font-size:14px;color:#212121;font-weight:normal;line-height:18px;letter-spacing:-0.441px;">Jaye [Jaye@Rice.edu];s…</div>
<div class="t" style="left:1481px;top:735px;font-size:14px;color:#212121;font-weight:normal;line-height:18px;">fischer-m2_000.pst</div>
<div class="t" style="left:1675px;top:735px;font-size:14px;color:#212121;font-weight:normal;line-height:18px;">Converted</div>
<div style="position:absolute;left:320px;top:762px;width:1531px;height:1px;background:#dadada"></div>
<div style="position:absolute;left:320px;top:873px;width:1531px;height:1px;background:#dadada"></div>
<svg class="ic" style="left:340px;top:893px;width:30px;height:30px;" viewBox="0 0 30 30"><g fill="#000"><rect x="6" y="5" width="16" height="2" rx="0.5"/><rect x="6" y="23" width="16" height="2" rx="0.5"/><path d="M14 8.1 L17.8 11.8 H15 V18.2 H17.8 L14 21.7 L10.2 18.2 H13 V11.8 H10.2Z"/></g></svg>
<div class="t" style="left:1148px;top:899px;font-size:14px;color:#424242;font-weight:normal;line-height:18px;letter-spacing:-0.2px;">Rows Per Page:</div>
<div class="t" style="left:1262px;top:898px;font-size:14px;color:#424242;font-weight:normal;line-height:18px;">15</div>
<svg class="ic" style="left:1289px;top:895px;width:24px;height:24px;" viewBox="0 0 24 24"><path fill="#757575" d="M7 10l5 5 5-5z"/></svg>
<div style="position:absolute;left:1341px;top:893px;width:109px;height:29px;border:1px solid #c4c4c4;border-radius:4px;"></div>
<div class="t" style="left:1351px;top:899px;font-size:14px;color:#212121;font-weight:normal;line-height:18px;">1</div>
<div class="t" style="left:1456px;top:899px;font-size:14px;color:#424242;font-weight:normal;line-height:18px;">-15 of 74553</div>
<svg class="ic" style="left:1647px;top:896px;width:24px;height:24px;" viewBox="0 0 24 24"><path fill="#212121" d="M18.41 16.59L13.82 12l4.59-4.59L17 6l-6 6 6 6zM6 6h2v12H6z"/></svg>
<svg class="ic" style="left:1703px;top:896px;width:24px;height:24px;" viewBox="0 0 24 24"><path fill="#212121" d="M15.41 7.41L14 6l-6 6 6 6 1.41-1.41L10.83 12z"/></svg>
<svg class="ic" style="left:1758.5px;top:896px;width:24px;height:24px;" viewBox="0 0 24 24"><path fill="#212121" d="M10 6L8.59 7.41 13.17 12l-4.58 4.59L10 18l6-6z"/></svg>
<svg class="ic" style="left:1815px;top:896px;width:24px;height:24px;" viewBox="0 0 24 24"><path fill="#212121" d="M5.59 7.41L10.18 12l-4.59 4.59L7 18l6-6-6-6zM16 6h2v12h-2z"/></svg>
<div style="position:absolute;left:1848px;top:936px;width:5px;height:6px;background:#000"></div>
<div style="position:absolute;left:0;top:57px;width:2px;height:7px;background:#dcdcdc;z-index:6"></div>
<div style="position:absolute;left:0;top:96px;width:2px;height:8px;background:#dcdcdc;z-index:6"></div>
<div style="position:absolute;left:1851px;top:56px;width:2px;height:8px;background:#d9d9d9;z-index:6"></div>
</body></html>
